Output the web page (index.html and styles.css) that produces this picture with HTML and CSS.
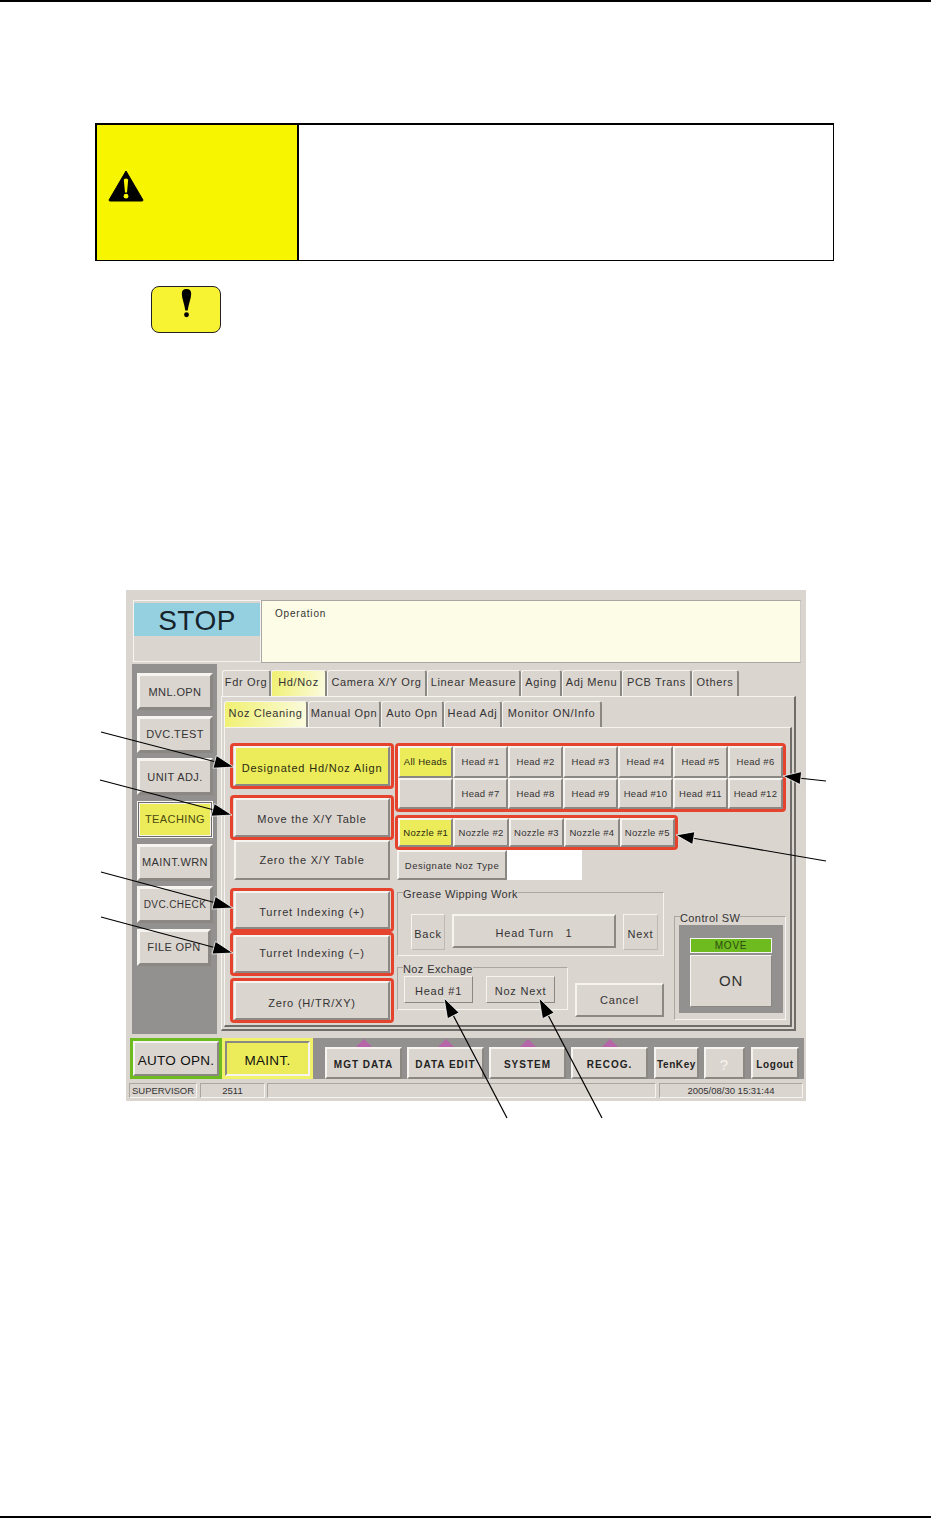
FILE: index.html
```html
<!DOCTYPE html>
<html lang="en">
<head>
  <meta charset="UTF-8">
  <meta name="viewport" content="width=device-width, initial-scale=1.0">
  <title>Head / Nozzle Teaching</title>
  <link rel="stylesheet" href="styles.css">
</head>
<body>
  <div class="warn-box">
    <div class="warn-label">
      <svg class="warn-icon" width="36" height="32" viewBox="0 0 36 32">
        <path d="M18 1 L35 30 Q35 31 34 31 L2 31 Q1 31 1 30 Z" fill="#000" stroke="#000" stroke-width="1" stroke-linejoin="round"/>
        <path d="M15.8 9.5 Q18 7.5 20.2 9.5 L19 22.5 L17 22.5 Z" fill="#f8f500"/>
        <circle cx="18" cy="26.2" r="2.4" fill="#f8f500"/>
      </svg>
    </div>
    <div class="warn-body"></div>
  </div>

  <div class="notice-icon">
    <svg width="15" height="30" viewBox="0 0 16 32">
      <path d="M8 1 C11.5 1 13 3 13 6 C13 11 10 17 9.3 24 L6.7 24 C6 17 3 11 3 6 C3 3 4.5 1 8 1 Z" fill="#000"/>
      <circle cx="8" cy="28.5" r="2.6" fill="#000"/>
    </svg>
  </div>

  <div class="ui">
    <div class="ui-top">
      <div class="stop-box"><div class="stop-label">STOP</div></div>
      <div class="message">Operation</div>
    </div>

    <div class="ui-mid">
      <div class="sidenav">
        <div class="side-btn">MNL.OPN</div>
        <div class="side-btn">DVC.TEST</div>
        <div class="side-btn">UNIT ADJ.</div>
        <div class="side-btn side-on">TEACHING</div>
        <div class="side-btn">MAINT.WRN</div>
        <div class="side-btn side-small">DVC.CHECK</div>
        <div class="side-btn side-narrow">FILE OPN</div>
      </div>

      <div class="main">
        <div class="tabs tabs-outer">
          <div class="tab">Fdr Org</div>
          <div class="tab tab-on">Hd/Noz</div>
          <div class="tab">Camera X/Y Org</div>
          <div class="tab">Linear Measure</div>
          <div class="tab">Aging</div>
          <div class="tab">Adj Menu</div>
          <div class="tab">PCB Trans</div>
          <div class="tab">Others</div>
        </div>
        <div class="panel">
          <div class="tabs tabs-inner">
            <div class="tab tab-on">Noz Cleaning</div>
            <div class="tab">Manual Opn</div>
            <div class="tab">Auto Opn</div>
            <div class="tab">Head Adj</div>
            <div class="tab">Monitor ON/Info</div>
          </div>
          <div class="panel-inner">
            <div class="col-left">
              <div class="hl hl-first"><div class="btn btn-yellow">Designated Hd/Noz Align</div></div>
              <div class="hl hl-second"><div class="btn">Move the X/Y Table</div></div>
              <div class="btn btn-plain">Zero the X/Y Table</div>
              <div class="hl hl-third"><div class="btn">Turret Indexing (+)</div></div>
              <div class="hl hl-fourth"><div class="btn">Turret Indexing (&minus;)</div></div>
              <div class="hl hl-fifth"><div class="btn">Zero (H/TR/XY)</div></div>
            </div>

            <div class="col-right">
              <div class="hl head-grid">
                <div class="btn cell btn-yellow">All Heads</div>
                <div class="btn cell">Head #1</div>
                <div class="btn cell">Head #2</div>
                <div class="btn cell">Head #3</div>
                <div class="btn cell">Head #4</div>
                <div class="btn cell">Head #5</div>
                <div class="btn cell">Head #6</div>
                <div class="btn cell cell-blank"></div>
                <div class="btn cell">Head #7</div>
                <div class="btn cell">Head #8</div>
                <div class="btn cell">Head #9</div>
                <div class="btn cell">Head #10</div>
                <div class="btn cell">Head #11</div>
                <div class="btn cell">Head #12</div>
              </div>
              <div class="hl noz-grid">
                <div class="btn cell btn-yellow">Nozzle #1</div>
                <div class="btn cell">Nozzle #2</div>
                <div class="btn cell">Nozzle #3</div>
                <div class="btn cell">Nozzle #4</div>
                <div class="btn cell">Nozzle #5</div>
              </div>
              <div class="type-row">
                <div class="btn cell type-btn">Designate Noz Type</div>
                <div class="type-value"></div>
              </div>

              <div class="lower">
                <div class="lower-left">
                  <div class="group grease">
                    <span class="group-label">Grease Wipping Work</span>
                    <div class="btn btn-flat back">Back</div>
                    <div class="btn turn">Head Turn &nbsp; 1</div>
                    <div class="btn btn-flat next">Next</div>
                  </div>
                  <div class="exchange-row">
                    <div class="group exchange">
                      <span class="group-label">Noz Exchage</span>
                      <div class="btn btn-thin">Head #1</div>
                      <div class="btn btn-thin">Noz Next</div>
                    </div>
                    <div class="btn cancel">Cancel</div>
                  </div>
                </div>
                <div class="group control">
                  <span class="group-label">Control SW</span>
                  <div class="control-well">
                    <div class="move">MOVE</div>
                    <div class="btn on-btn">ON</div>
                  </div>
                </div>
              </div>
            </div>
          </div>
        </div>
      </div>
    </div>

    <div class="bottom-bar">
      <div class="mode mode-auto"><div class="mode-inner">AUTO OPN.</div></div>
      <div class="mode mode-maint"><div class="mode-inner">MAINT.</div></div>
      <div class="func-bar">
        <div class="btn func has-menu">MGT DATA</div>
        <div class="btn func has-menu">DATA EDIT</div>
        <div class="btn func has-menu">SYSTEM</div>
        <div class="btn func has-menu">RECOG.</div>
        <div class="btn func func-ten">TenKey</div>
        <div class="btn func func-help">?</div>
        <div class="btn func func-logout">Logout</div>
      </div>
    </div>

    <div class="status-bar">
      <div class="status s-user">SUPERVISOR</div>
      <div class="status s-code">2511</div>
      <div class="status s-fill"></div>
      <div class="status s-date">2005/08/30 15:31:44</div>
    </div>
  </div>

  <div class="foot-rule"></div>

  <!-- callout arrows drawn over the screenshot -->
  <svg class="callouts" width="931" height="1518" viewBox="0 0 931 1518">
    <g stroke="#000" stroke-width="1.2">
      <line x1="101" y1="732" x2="220" y2="763"/>
      <line x1="100" y1="780" x2="218" y2="811"/>
      <line x1="101" y1="872" x2="220" y2="904"/>
      <line x1="101" y1="917" x2="220" y2="949"/>
      <line x1="826" y1="781" x2="798" y2="778"/>
      <line x1="826" y1="861" x2="692" y2="838"/>
      <line x1="507" y1="1118" x2="452" y2="1013"/>
      <line x1="602" y1="1118" x2="547" y2="1013"/>
    </g>
    <g fill="#000" stroke="#fff" stroke-width="0.8">
      <polygon points="234,767 213,768.2 216.4,755.6"/>
      <polygon points="232,815 211,816.2 214.4,803.6"/>
      <polygon points="233,908 212,909 215.4,896.4"/>
      <polygon points="233,953 212,954 215.4,941.4"/>
      <polygon points="783,776 801.6,771.6 800.1,784.6"/>
      <polygon points="676,835 694.8,831.7 692.6,844.5"/>
      <polygon points="444,998 459.1,1012.7 447.5,1018.7"/>
      <polygon points="539,998 554.1,1012.7 542.5,1018.7"/>
    </g>
  </svg>
</body>
</html>
```

FILE: styles.css
```css
* {
  box-sizing: border-box;
}
body {
  position: relative;
  display: flex;
  flex-direction: column;
  width: 931px;
  height: 1518px;
  margin: 0;
  border-top: 2px solid #000;
  background-color: #fff;
  font-family: "Liberation Sans", Arial, sans-serif;
  font-size: 11px;
  letter-spacing: 0.8px;
  color: #333;
  overflow: hidden;
}

/* warning table */
.warn-box {
  display: flex;
  width: 739px;
  height: 138px;
  margin: 121px 0 0 95px;
  border: 1px solid #000;
  border-top-width: 2px;
  border-left-width: 2px;
}
.warn-label {
  width: 202px;
  padding: 45px 0 0 11px;
  background-color: #f8f500;
  border-right: 2px solid #000;
}
.warn-icon {
  display: block;
}
.warn-body {
  flex: 1;
}
.notice-icon {
  display: flex;
  justify-content: center;
  width: 70px;
  height: 47px;
  margin: 25px 0 0 151px;
  padding-top: 1px;
  background-color: #f7f232;
  border: 1px solid #222;
  border-radius: 8px;
}

/* machine screen */
.ui {
  width: 680px;
  height: 511px;
  margin: 257px 0 0 126px;
  background-color: #dbd5cf;
}
.ui-top {
  display: flex;
  height: 74px;
  padding: 10px 5px 0 7px;
}
.stop-box {
  width: 128px;
  height: 62px;
  padding-top: 2px;
  border: 1px solid #f6f4f0;
}
.stop-label {
  height: 33px;
  background-color: #94d0e0;
  color: #16232b;
  font-size: 28px;
  line-height: 35px;
  text-align: center;
  letter-spacing: 0.5px;
}
.message {
  flex: 1;
  height: 63px;
  padding: 7px 13px;
  background-color: #fdfce6;
  border: 1px solid #aaa7a2;
  border-right-color: #ccc9c4;
  font-size: 10px;
}
.ui-mid {
  display: flex;
  height: 370px;
  margin-left: 6px;
}
.sidenav {
  display: flex;
  flex-direction: column;
  gap: 5.67px;
  width: 85px;
  padding: 9px 4px 0 5px;
  background-color: #939090;
}
.side-btn {
  display: flex;
  align-items: center;
  justify-content: center;
  height: 37px;
  background-color: #dbd5cf;
  border: 3px solid;
  border-color: #f6f4f0 #8b8782 #8b8782 #f6f4f0;
  white-space: nowrap;
  letter-spacing: 0.4px;
}
.side-on {
  background-color: #ecec5a;
  border: 3px double #f6f4f0;
  outline: 1px solid #6f6c69;
  outline-offset: -2px;
  color: #4a4a10;
}
.side-small {
  font-size: 10px;
}
.side-narrow {
  width: 74px;
}
.main {
  flex: 1;
  padding: 6px 0 0 4px;
}
.tabs {
  display: grid;
}
.tabs-outer {
  grid-template-columns: 49px 56px 100px 94px 41px 60px 70px 47px;
  height: 26px;
  padding-left: 1px;
}
.tabs-inner {
  grid-template-columns: 84px 73px 63px 58px 100px;
  height: 26px;
}
.tab {
  display: flex;
  align-items: center;
  justify-content: center;
  padding-bottom: 3px;
  border-top: 1px solid #f6f4f0;
  border-left: 1px solid #f6f4f0;
  border-right: 2px solid #8b8782;
  border-radius: 3px 3px 0 0;
  white-space: nowrap;
  letter-spacing: 0.65px;
}
.tab-on {
  background: linear-gradient(100deg, #f0f070, #fbfbe0);
}
.panel {
  width: 575px;
  height: 335px;
  padding: 4px 2px 0;
  border-top: 1px solid #f6f4f0;
  border-left: 1px solid #f6f4f0;
  border-right: 2px solid #6f6c69;
  border-bottom: 2px solid #6f6c69;
}
.panel-inner {
  display: flex;
  height: 300px;
  padding: 15px 0 0 5px;
  border-top: 1px solid #f6f4f0;
  border-left: 1px solid #f6f4f0;
  border-right: 2px solid #6f6c69;
  border-bottom: 2px solid #6f6c69;
}

/* buttons */
.btn {
  display: flex;
  align-items: center;
  justify-content: center;
  background-color: #dbd5cf;
  border: 2px solid;
  border-color: #f6f4f0 #8b8782 #8b8782 #f6f4f0;
  white-space: nowrap;
}
.btn-yellow {
  background-color: #ecec5a;
  color: #2a2a10;
}
.btn-flat {
  border-width: 1px;
  border-color: #f6f4f0 #bdb9b4 #bdb9b4 #f6f4f0;
}
.btn-thin {
  border-width: 1px;
  border-color: #f6f4f0 #8b8782 #8b8782 #f6f4f0;
}

/* red highlight frames */
.hl {
  border: 3px solid #e5432e;
  border-radius: 4px;
}
.col-left {
  display: flex;
  flex-direction: column;
  width: 164px;
}
.col-left .hl {
  padding: 0 1px;
}
.col-left .btn {
  height: 100%;
}
.hl-first {
  height: 46px;
}
.hl-first .btn,
.hl-third .btn,
.hl-fifth .btn {
  padding-top: 4px;
}
.hl-second {
  height: 45px;
  margin-top: 6px;
}
.hl-second .btn {
  padding-top: 2px;
}
.col-left .btn-plain {
  height: 40px;
  margin: 0 4px;
}
.hl-third {
  height: 44px;
  margin-top: 8px;
}
.hl-fourth {
  height: 44px;
}
.hl-fourth .btn {
  padding-bottom: 2px;
}
.hl-fifth {
  height: 45px;
  margin-top: 2px;
}
.col-right {
  width: 391px;
  margin-left: 1px;
}
.head-grid {
  display: grid;
  grid-template-columns: repeat(7, 55px);
  grid-auto-rows: 31.5px;
  width: 391px;
  height: 69px;
}
.noz-grid {
  display: grid;
  grid-template-columns: repeat(5, 55.4px);
  width: 283px;
  height: 35px;
  margin-top: 3px;
}
.cell {
  font-size: 9.5px;
  letter-spacing: 0.3px;
}
.cell-blank {
  background-color: #dbd5cf;
}
.type-row {
  display: flex;
  height: 30px;
  margin-left: 2px;
}
.type-btn {
  width: 110px;
  letter-spacing: 0.5px;
}
.type-value {
  width: 75px;
  background-color: #fff;
}

/* grouped controls */
.lower {
  display: flex;
  margin-left: 2px;
}
.lower-left {
  width: 267px;
}
.group {
  position: relative;
  border: 1px solid;
  border-color: #aaa7a2 #f6f4f0 #f6f4f0 #aaa7a2;
}
.group-label {
  position: absolute;
  top: -5px;
  left: 5px;
  line-height: 13px;
  background-color: #dbd5cf;
  letter-spacing: 0.4px;
}
.grease {
  display: flex;
  align-items: flex-start;
  gap: 7px;
  width: 267px;
  height: 64px;
  margin-top: 12px;
  padding: 21px 0 0 13px;
}
.grease .btn {
  padding-top: 3px;
}
.back {
  width: 34px;
  height: 36px;
}
.turn {
  width: 164px;
  height: 34px;
}
.next {
  width: 35px;
  height: 36px;
}
.exchange-row {
  display: flex;
  align-items: flex-start;
  margin-top: 11px;
}
.exchange {
  display: flex;
  align-items: flex-start;
  gap: 13px;
  width: 171px;
  height: 43px;
  padding: 8px 0 0 6px;
}
.exchange .btn {
  width: 69px;
  height: 27px;
  padding-top: 2px;
}
.cancel {
  width: 89px;
  height: 34px;
  margin: 16px 0 0 7px;
}
.control {
  width: 112px;
  height: 104px;
  margin: 36px 0 0 10px;
  padding: 8px 2px 0 4px;
}
.control-well {
  height: 88px;
  padding: 13px 11px 0;
  background-color: #939090;
}
.move {
  height: 15px;
  background-color: #6dbb1f;
  border: 1px solid #f6f4f0;
  color: #2b4a10;
  font-size: 10px;
  line-height: 14px;
  text-align: center;
}
.on-btn {
  height: 52px;
  margin-top: 2px;
  padding-bottom: 2px;
  border-width: 1px;
  font-size: 15px;
}

/* bottom strip */
.bottom-bar {
  display: flex;
  height: 41px;
  margin: 4px 2px 0 4px;
  background-color: #939090;
}
.mode {
  width: 92px;
  padding: 3px;
  font-size: 13.5px;
  color: #111;
}
.mode-auto {
  background-color: #6dbb1f;
}
.mode-maint {
  width: 91px;
  background-color: #f2f26a;
}
.mode-inner {
  display: flex;
  align-items: center;
  justify-content: center;
  height: 100%;
  padding-top: 3px;
  background-color: #dbd5cf;
  border: 2px solid;
  border-color: #f6f4f0 #8b8782 #8b8782 #f6f4f0;
  letter-spacing: 0.3px;
}
.mode-maint .mode-inner {
  background-color: #ecec5a;
  border-color: #8b8782 #f6f4f0 #f6f4f0 #8b8782;
}
.func-bar {
  display: flex;
  align-items: flex-end;
  gap: 5px;
  flex: 1;
  padding-left: 12px;
}
.func {
  position: relative;
  width: 77px;
  height: 32px;
  padding-top: 2px;
  font-size: 10px;
  font-weight: bold;
  letter-spacing: 1px;
  color: #222;
}
.func.has-menu::before {
  content: "";
  position: absolute;
  top: -10px;
  left: 50%;
  margin-left: -8px;
  border-left: 8px solid transparent;
  border-right: 8px solid transparent;
  border-bottom: 8px solid #b565a8;
}
.func-ten {
  width: 45px;
  margin-left: 1px;
  letter-spacing: 0.6px;
}
.func-help {
  width: 41px;
  color: #f6f4f0;
  font-size: 15px;
  font-weight: normal;
}
.func-logout {
  width: 48px;
  margin-left: 1px;
  letter-spacing: 0.6px;
}
.status-bar {
  display: flex;
  height: 15px;
  margin: 4px 3px 0;
  font-size: 9.5px;
  letter-spacing: 0;
}
.status {
  display: flex;
  align-items: center;
  border: 1px solid;
  border-color: #aaa7a2 #f6f4f0 #f6f4f0 #aaa7a2;
  white-space: nowrap;
}
.s-user {
  width: 68px;
  padding-left: 2px;
}
.s-code {
  justify-content: center;
  width: 65px;
  margin-left: 3px;
}
.s-fill {
  width: 389px;
  margin-left: 2px;
}
.s-date {
  justify-content: center;
  width: 144px;
  margin-left: 3px;
}
.foot-rule {
  height: 2px;
  margin-top: auto;
  background-color: #000;
}
.callouts {
  position: absolute;
  top: -2px;
  left: 0;
}
```
